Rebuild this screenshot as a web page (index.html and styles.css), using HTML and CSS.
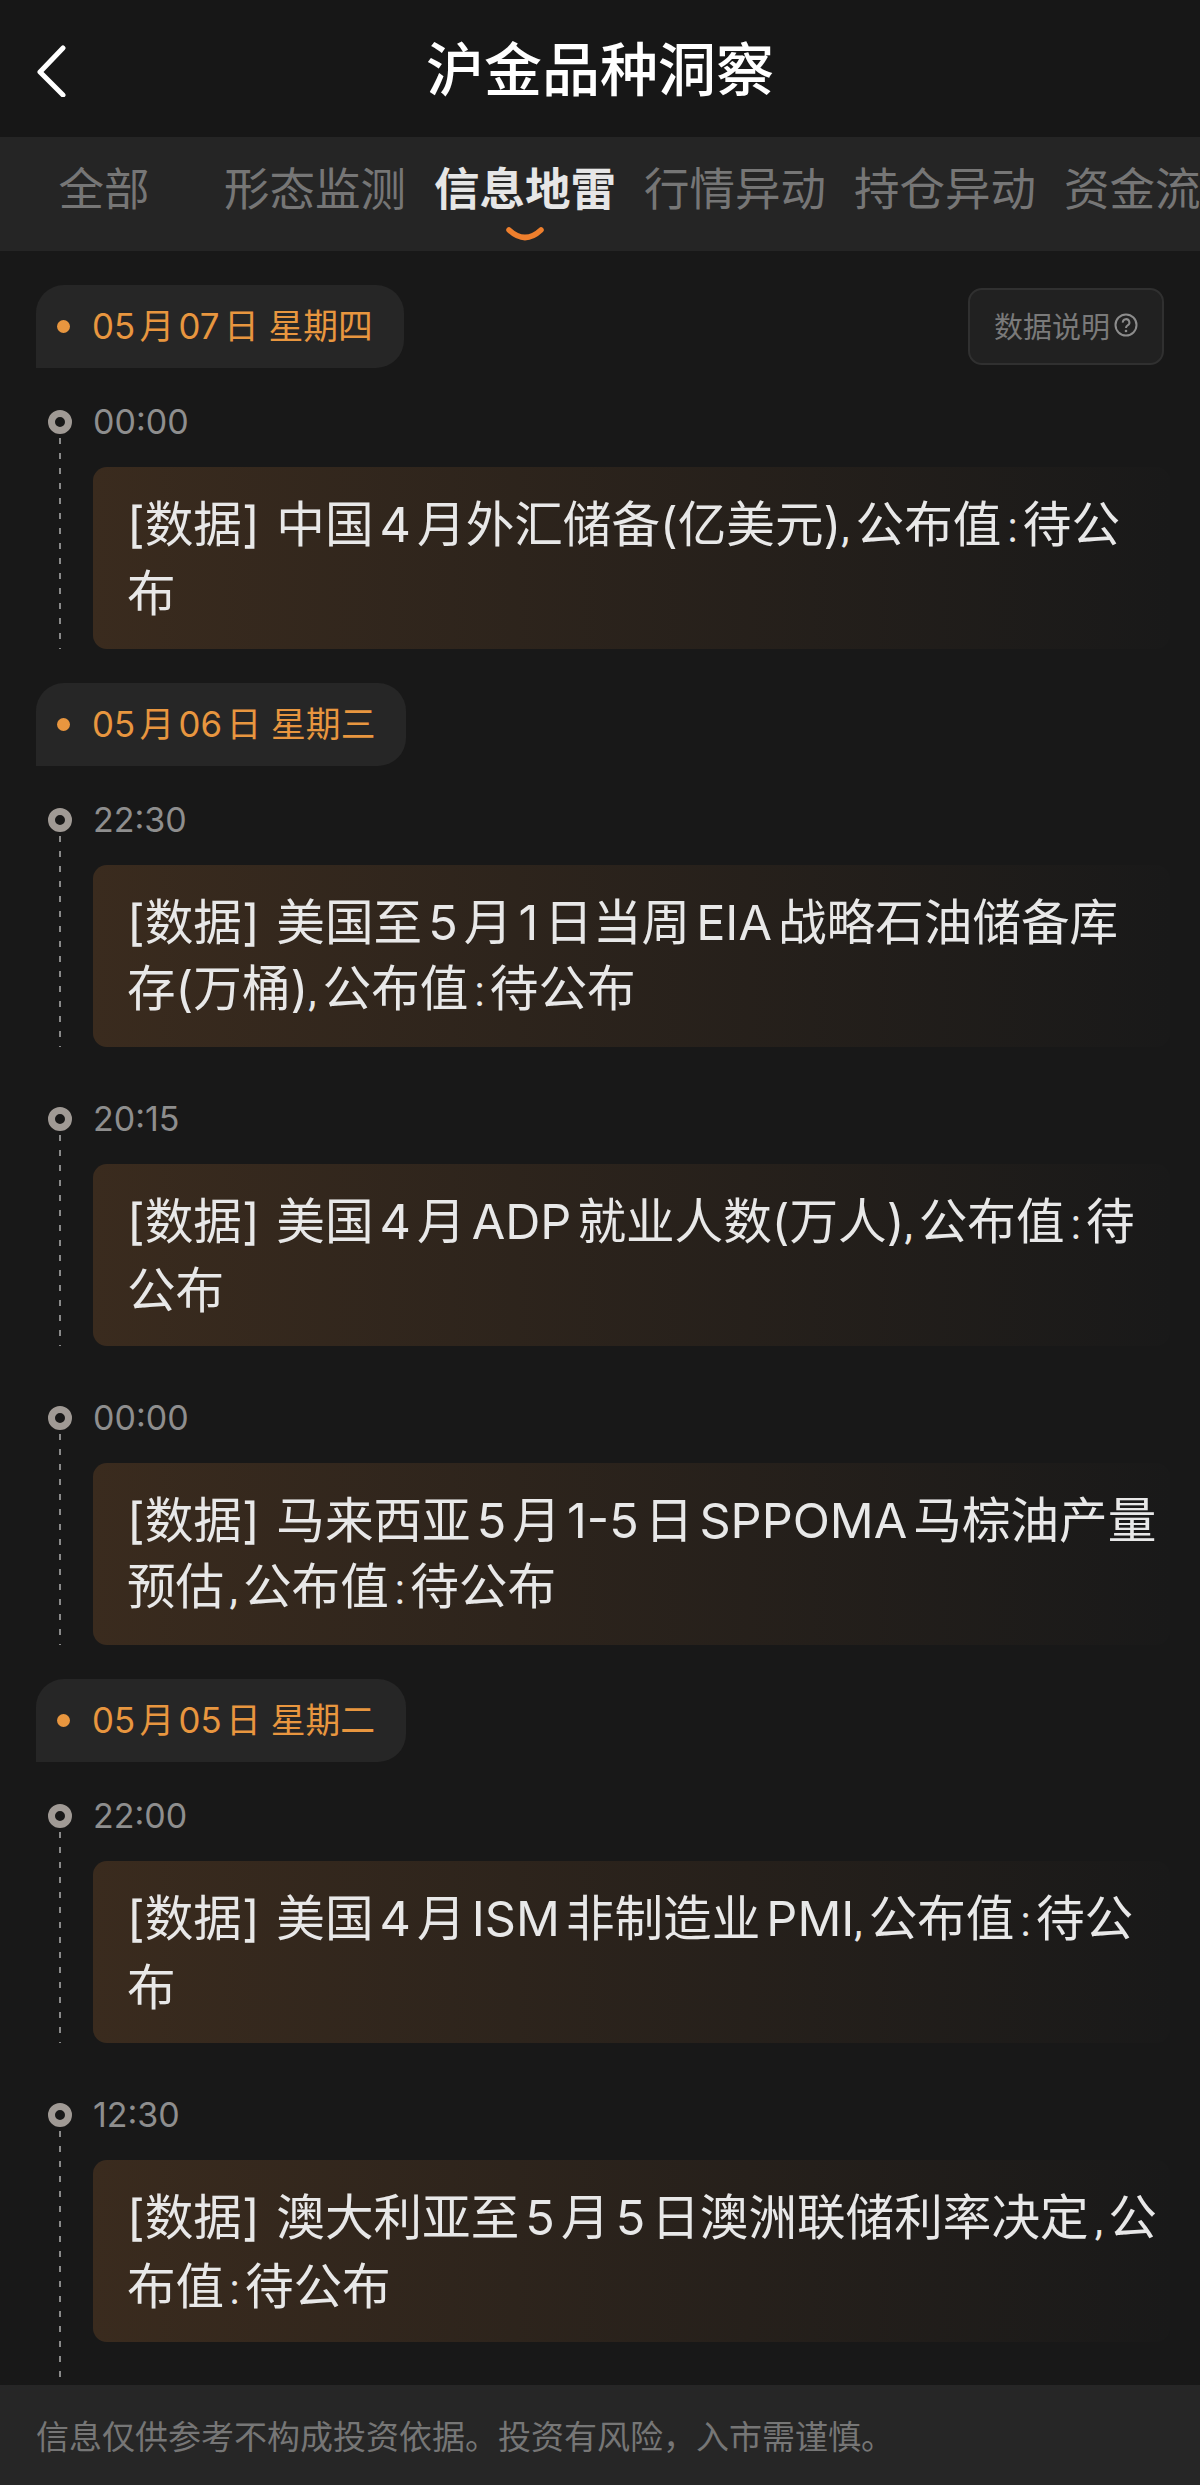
FILE: index.html
```html
<!DOCTYPE html>
<html lang="zh-CN">
<head>
    <meta charset="UTF-8">
    <meta name="viewport" content="width=device-width, initial-scale=1.0">
    <title>沪金品种洞察</title>
    <link rel="stylesheet" href="styles.css">
</head>
<body>

<div class="header">
    <svg class="backIcon" width="32" height="52" viewBox="0 0 32 52">
        <path d="M27 3 L4 27 L27 50" fill="none" stroke="#fff" stroke-width="5" stroke-linecap="round" stroke-linejoin="round"/>
    </svg>
    <h1>沪金品种洞察</h1>
</div>

<div class="tabs">
    <div class="tab">全部</div>
    <div class="tab">形态监测</div>
    <div class="tab active">信息地雷
        <svg class="tabMark" width="38" height="16" viewBox="0 0 38 16">
            <path d="M3 3 Q19 18 35 3" fill="none" stroke="#ee7f2d" stroke-width="5.5" stroke-linecap="round"/>
        </svg>
    </div>
    <div class="tab">行情异动</div>
    <div class="tab">持仓异动</div>
    <div class="tab">资金流向</div>
</div>

<div class="content">
    <!-- 05月07日 -->
    <div class="dayRow">
        <div class="datePill"><span class="dateDot"></span>05月07日 星期四</div>
        <div class="helpBtn">数据说明
            <svg width="24" height="24" viewBox="0 0 24 24">
                <circle cx="12" cy="12" r="10.5" fill="none" stroke="#8c8c8c" stroke-width="2"/>
                <path d="M8.8 9.6 A3.3 3.3 0 1 1 13.6 12.4 C12.4 13 12 13.6 12 15" fill="none" stroke="#8c8c8c" stroke-width="2"/>
                <circle cx="12" cy="18" r="1.3" fill="#8c8c8c"/>
            </svg>
        </div>
    </div>
    <div class="item">
        <div class="rail"><span class="ring"></span><span class="dash"></span></div>
        <div class="itemBody">
            <div class="time">00:00</div>
            <div class="card">[数据] 中国4月外汇储备(亿美元)<span class="punc">,</span>公布值<span class="punc">:</span>待公<br>布</div>
        </div>
    </div>

    <!-- 05月06日 -->
    <div class="dayRow">
        <div class="datePill"><span class="dateDot"></span>05月06日 星期三</div>
    </div>
    <div class="item">
        <div class="rail"><span class="ring"></span><span class="dash"></span></div>
        <div class="itemBody">
            <div class="time">22:30</div>
            <div class="card">[数据] 美国至5月1日当周EIA战略石油储备库<br>存(万桶)<span class="punc">,</span>公布值<span class="punc">:</span>待公布</div>
        </div>
    </div>
    <div class="item">
        <div class="rail"><span class="ring"></span><span class="dash"></span></div>
        <div class="itemBody">
            <div class="time">20:15</div>
            <div class="card">[数据] 美国4月ADP就业人数(万人)<span class="punc">,</span>公布值<span class="punc">:</span>待<br>公布</div>
        </div>
    </div>
    <div class="item">
        <div class="rail"><span class="ring"></span><span class="dash"></span></div>
        <div class="itemBody">
            <div class="time">00:00</div>
            <div class="card">[数据] 马来西亚5月1-5日SPPOMA马棕油产量<br>预估<span class="punc">,</span>公布值<span class="punc">:</span>待公布</div>
        </div>
    </div>

    <!-- 05月05日 -->
    <div class="dayRow">
        <div class="datePill"><span class="dateDot"></span>05月05日 星期二</div>
    </div>
    <div class="item">
        <div class="rail"><span class="ring"></span><span class="dash"></span></div>
        <div class="itemBody">
            <div class="time">22:00</div>
            <div class="card">[数据] 美国4月ISM非制造业PMI<span class="punc">,</span>公布值<span class="punc">:</span>待公<br>布</div>
        </div>
    </div>
    <div class="item">
        <div class="rail"><span class="ring"></span><span class="dash"></span></div>
        <div class="itemBody">
            <div class="time">12:30</div>
            <div class="card">[数据] 澳大利亚至5月5日澳洲联储利率决定<span class="punc">,</span>公<br>布值<span class="punc">:</span>待公布</div>
        </div>
    </div>
</div>

<div class="footer">信息仅供参考不构成投资依据。投资有风险，入市需谨慎。</div>

</body>
</html>
```

FILE: styles.css
```css
* {
    box-sizing: border-box;
}

body {
    font-family: Inter, "Noto Sans CJK SC", sans-serif;
    margin: 0;
    padding: 0;
    width: 1200px;
    height: 2485px;
    background-color: #181818;
    display: flex;
    flex-direction: column;
    overflow: hidden;
    text-autospace: normal;
}

.header {
    height: 137px;
    padding-bottom: 6px;
    display: flex;
    align-items: center;
    justify-content: center;
    position: relative;
    background-color: #171717;
}

.header h1 {
    margin: 0;
    font-size: 58px;
    font-weight: 500;
    color: #fff;
}

.backIcon {
    position: absolute;
    left: 36px;
    top: 45px;
}

.tabs {
    height: 114px;
    display: flex;
    gap: 30px;
    padding-left: 14px;
    background-color: #252525;
    overflow: hidden;
    flex-shrink: 0;
}

.tab {
    width: 180px;
    flex-shrink: 0;
    font-size: 45.5px;
    line-height: 106px;
    text-align: center;
    color: #767676;
    position: relative;
    white-space: nowrap;
}

.tab.active {
    font-weight: 700;
    color: #e6e6e6;
}

.tabMark {
    position: absolute;
    left: 72px;
    top: 90px;
}

.content {
    flex: 1;
    padding: 34px 30px 0 36px;
    overflow: hidden;
}

.dayRow {
    display: flex;
    align-items: center;
    justify-content: space-between;
    padding-right: 6px;
    height: 83px;
}

.datePill {
    height: 83px;
    padding: 0 31px 6px 21px;
    display: flex;
    align-items: center;
    gap: 22px;
    font-size: 34.8px;
    color: #e8963f;
    background-color: #262626;
    border-radius: 28px 28px 28px 0;
}

.dateDot {
    width: 13px;
    height: 13px;
    margin-top: 6px;
    border-radius: 50%;
    background-color: #e8963f;
}

.helpBtn {
    width: 196px;
    height: 77px;
    padding-bottom: 4px;
    display: flex;
    align-items: center;
    justify-content: center;
    gap: 4px;
    font-size: 29px;
    color: #7a7a7a;
    background-color: #212121;
    border: 2px solid #303030;
    border-radius: 14px;
}

.item {
    display: flex;
    margin-top: 60px;
    padding-left: 12px;
}

.dayRow + .item {
    margin-top: 42px;
}

.rail {
    width: 24px;
    display: flex;
    flex-direction: column;
    align-items: center;
    margin-right: 21px;
}

/* last line runs on past the card, down to the footer */
.item:last-child .rail {
    margin-bottom: -38px;
}

.ring {
    width: 24px;
    height: 24px;
    flex-shrink: 0;
    border-radius: 50%;
    border: 7px solid #a09a95;
}

.dash {
    flex: 1;
    width: 2px;
    margin-top: 4px;
    background: repeating-linear-gradient(to bottom, #8a8a8a 0, #8a8a8a 6px, transparent 6px, transparent 15px);
}

.itemBody {
    flex: 1;
}

.time {
    height: 24px;
    font-size: 34px;
    line-height: 24px;
    color: #8e8e8e;
}

.card {
    margin-top: 33px;
    height: 182px;
    padding: 25px 0 0 34px;
    font-size: 48.6px;
    line-height: 66px;
    word-spacing: 3px;
    color: #e8e8e8;
    border-radius: 14px;
    background: linear-gradient(to right, #3a2b1e, #191919);
}

/* comma and colon sit tight against the Chinese text */
.punc {
    font-family: Roboto, sans-serif;
    font-size: 42px;
}

.item + .dayRow {
    margin-top: 34px;
}

.footer {
    height: 100px;
    padding-left: 36px;
    flex-shrink: 0;
    display: flex;
    align-items: center;
    font-size: 33px;
    color: #767676;
    background-color: #262626;
}
```
